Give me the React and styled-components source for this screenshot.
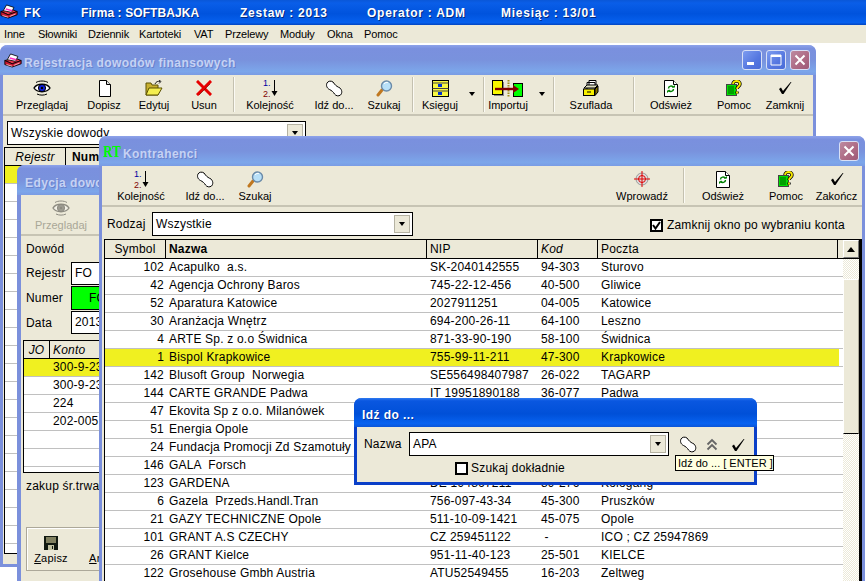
import React from 'react';
import styled, { createGlobalStyle } from 'styled-components';

const GlobalStyle = createGlobalStyle`
  html, body {
    margin: 0;
    padding: 0;
    background: #fff;
    height: 100%;
    overflow: hidden;
  }
  #root { height: 100%; }
  * { box-sizing: border-box; }
`;

const BEIGE = '#ece9d8';
const UI_FONT = '"Liberation Sans", Arial, sans-serif';

const Desktop = styled.div`
  position: relative;
  width: 866px;
  height: 581px;
  overflow: hidden;
  background: #fff;
  font-family: ${UI_FONT};
  font-size: 11px;
  color: #000;
`;

/* ---------- main application bar ---------- */
const AppBar = styled.div`
  display: flex;
  align-items: center;
  height: 25px;
  background: linear-gradient(180deg, #0a57d8 0%, #0a5ee8 12%, #0053dd 55%, #0660ee 90%, #0345c0 100%);
  color: #fff;
  font-size: 12px;
  font-weight: bold;
  text-shadow: 1px 1px 0 rgba(0, 0, 40, 0.55);
  white-space: nowrap;
`;
const AppField = styled.span`
  flex: none;
  width: ${({ $w }) => $w}px;
  letter-spacing: ${({ $sp }) => $sp ?? 0.75}px;
`;
const MenuBar = styled.div`
  display: flex;
  align-items: center;
  height: 18px;
  background: ${BEIGE};
  letter-spacing: -0.15px;
`;
const MenuEntry = styled.span`
  flex: none;
  width: ${({ $w }) => $w}px;
  padding-left: 4px;
`;

/* ---------- windows ---------- */
const Window = styled.div`
  position: absolute;
  left: ${({ $x }) => $x}px;
  top: ${({ $y }) => $y}px;
  width: ${({ $w }) => $w}px;
  height: ${({ $h }) => $h}px;
  display: flex;
  flex-direction: column;
  border: solid ${({ $active }) => ($active ? '#0a3fc8' : '#7b90dc')};
  border-width: 0 ${({ $bw }) => $bw}px ${({ $bw }) => $bw}px;
  border-radius: 8px 8px 0 0;
  background: ${BEIGE};
`;
const TitleBar = styled.div`
  flex: none;
  display: flex;
  align-items: center;
  gap: 2px;
  height: ${({ $h }) => $h}px;
  margin: 0 -${({ $bw }) => $bw}px;
  padding: 0 ${({ $bw }) => $bw + 1}px;
  border-radius: 7px 7px 0 0;
  background: ${({ $active }) =>
    $active
      ? 'linear-gradient(180deg, #2f7af0 0%, #0a57e0 10%, #0050d8 55%, #0762f0 88%, #0a55d8 100%)'
      : 'linear-gradient(180deg, #8ea3ea 0%, #7a90de 12%, #7992dd 50%, #7ca6ea 88%, #7a9ce4 100%)'};
`;
const TitleText = styled.span`
  flex: 1;
  padding: 5px 0 0 ${({ $pl }) => $pl || 0}px;
  font-size: 12px;
  font-weight: bold;
  letter-spacing: 0.42px;
  white-space: nowrap;
  overflow: hidden;
  color: ${({ $active }) => ($active ? '#fff' : '#c6d2f4')};
  text-shadow: 1px 1px 0 ${({ $active }) => ($active ? '#00309c' : '#6a82cc')};
`;
const RtLogo = styled.span`
  flex: none;
  width: 18px;
  font-family: "Liberation Serif", serif;
  font-size: 17px;
  font-weight: bold;
  color: #00ff00;
  line-height: 1;
  transform: scaleX(0.76);
  transform-origin: left center;
  white-space: nowrap;
`;
const CaptionButtons = styled.div`
  display: flex;
  gap: 4px;
  margin-right: 2px;
`;
const CaptionButton = styled.div`
  width: 20px;
  height: 20px;
  border: 1px solid #d8e0f6;
  border-radius: 3px;
  background: ${({ $close }) =>
    $close
      ? 'linear-gradient(135deg, #bd8aa0 0%, #ad6a84 60%, #9d5a78 100%)'
      : 'linear-gradient(135deg, #7d9cf0 0%, #5577e0 60%, #4a6cd8 100%)'};
  display: flex;
  align-items: center;
  justify-content: center;
`;

/* ---------- toolbars ---------- */
const Toolbar = styled.div`
  flex: none;
  display: flex;
  align-items: stretch;
  height: ${({ $h }) => $h}px;
  padding-left: ${({ $pl }) => $pl}px;
  border-bottom: 2px solid #c7c4b4;
`;
const ToolItem = styled.div`
  flex: none;
  width: ${({ $w }) => $w}px;
  display: flex;
  flex-direction: column;
  align-items: center;
  padding-top: 4px;
  color: ${({ $disabled }) => ($disabled ? '#a9a797' : '#000')};
  white-space: nowrap;
`;
const IconSlot = styled.div`
  height: 18px;
  margin-bottom: 2px;
  display: flex;
  align-items: center;
  justify-content: center;
  opacity: ${({ $disabled }) => ($disabled ? 0.4 : 1)};
  filter: ${({ $disabled }) => ($disabled ? 'grayscale(1)' : 'none')};
`;
const CaretSlot = styled.div`
  flex: none;
  width: ${({ $w }) => $w}px;
  display: flex;
  align-items: flex-start;
  justify-content: center;
  padding-top: 17px;
`;
const Caret = styled.div`
  width: 0;
  height: 0;
  border-left: 3.5px solid transparent;
  border-right: 3.5px solid transparent;
  border-top: 4px solid #000;
`;
const ToolSep = styled.div`
  flex: none;
  width: 2px;
  margin: 2px 0 2px ${({ $ml }) => $ml || 0}px;
  background: #c4c1b0;
  border-right: 1px solid #fbfaf4;
`;
const ToolSpacer = styled.div`
  flex: 1;
`;

/* ---------- form controls ---------- */
const ComboBox = styled.div`
  flex: none;
  display: flex;
  align-items: stretch;
  width: ${({ $w }) => $w}px;
  height: 24px;
  padding: 0 2px 0 3px;
  border: 1px solid #000;
  background: #fff;
  font-size: 12px;
  letter-spacing: 0.2px;
`;
const ComboValue = styled.span`
  flex: 1;
  align-self: center;
`;
const ComboArrow = styled.div`
  flex: none;
  width: 16px;
  margin: 2px 0;
  border: 1px solid #b5b2a2;
  background: ${BEIGE};
  display: flex;
  align-items: center;
  justify-content: center;
`;
const BlackBox = styled.div`
  flex: none;
  width: 13px;
  height: 13px;
  border: 2px solid #000;
  background: #fff;
  display: flex;
  align-items: center;
  justify-content: center;
`;

/* ---------- grids ---------- */
const GridFrame = styled.div`
  flex: ${({ $h }) => ($h ? 'none' : 1)};
  height: ${({ $h }) => ($h ? `${$h}px` : 'auto')};
  margin: ${({ $m }) => $m};
  overflow: hidden;
  border: 1px solid #000;
  background: #fff;
  font-size: 12px;
  letter-spacing: 0.2px;
`;
const GridHead = styled.div`
  display: grid;
  grid-template-columns: ${({ $cols }) => $cols};
  height: ${({ $h }) => $h}px;
  background: ${BEIGE};
  border-bottom: 1px solid #000;
`;
const HeadCell = styled.div`
  display: flex;
  align-items: center;
  justify-content: ${({ $center }) => ($center ? 'center' : 'flex-start')};
  padding-left: ${({ $center, $pl }) => ($center ? 0 : $pl ?? 3)}px;
  border-right: 1px solid #000;
  font-style: ${({ $italic }) => ($italic ? 'italic' : 'normal')};
  font-weight: ${({ $bold }) => ($bold ? 'bold' : 'normal')};
  overflow: hidden;
  white-space: nowrap;
`;
const GridRow = styled.div`
  display: grid;
  grid-template-columns: ${({ $cols }) => $cols};
  height: 18px;
  line-height: 17px;
  border-bottom: 1px solid #c0c0c0;
  background: ${({ $active }) => ($active ? '#f0f020' : '#fff')};
`;
const Cell = styled.div`
  padding: 0 ${({ $right }) => ($right ? 2 : 0)}px 0 ${({ $right }) => ($right ? 0 : 3)}px;
  text-align: ${({ $right }) => ($right ? 'right' : 'left')};
  overflow: hidden;
  white-space: pre;
`;
const RowTail = styled.div`
  background: #fff;
`;

/* ---------- Kontrahenci ---------- */
const FilterRow = styled.div`
  flex: none;
  display: flex;
  align-items: center;
  height: 31px;
  padding: 2px 0 0 ${({ $pl }) => $pl}px;
  font-size: 12px;
  letter-spacing: 0.2px;
`;
const FilterLabel = styled.span`
  width: 45px;
`;
const CheckLabel = styled.label`
  display: flex;
  align-items: center;
  gap: 4px;
  margin-left: auto;
  margin-right: 17px;
  padding-top: 3px;
`;
const ListArea = styled.div`
  flex: 1;
  margin: 1px 0 0 2px;
  overflow: hidden;
  border: solid #000;
  border-width: 1px 3px 0 1px;
  background: #fff;
  font-size: 12px;
  letter-spacing: 0.2px;
`;
const ListBody = styled.div`
  display: flex;
`;
const ListRows = styled.div`
  flex: 1;
`;
const Scroller = styled.div`
  flex: none;
  width: 16px;
  display: flex;
  flex-direction: column;
`;
const ScrollTrack = styled.div`
  height: ${({ $h }) => $h}px;
  background: repeating-conic-gradient(#fff 0% 25%, ${BEIGE} 0% 50%) 0 0 / 2px 2px;
`;
const ScrollThumb = styled.div`
  height: 155px;
  background: ${BEIGE};
  border: 1px solid #fff;
  border-bottom: 1px solid #000;
  border-right-color: #aca899;
`;
const ScrollUp = styled.div`
  flex: none;
  width: 16px;
  margin-left: 5px;
  display: flex;
  align-items: center;
  justify-content: center;
  background: ${BEIGE};
  border: 1px solid;
  border-color: #fff #777 #777 #fff;
`;
const UpArrow = styled.div`
  width: 0;
  height: 0;
  border-left: 4px solid transparent;
  border-right: 4px solid transparent;
  border-bottom: 5px solid #000;
`;

/* ---------- Edycja dowodu ---------- */
const FormBody = styled.div`
  flex: 1;
  display: flex;
  flex-direction: column;
  padding-left: 5px;
  font-size: 12px;
  letter-spacing: 0.2px;
`;
const FormRow = styled.div`
  flex: none;
  display: flex;
  align-items: center;
  height: ${({ $h }) => $h}px;
`;
const FormLabel = styled.span`
  flex: none;
  width: 45px;
`;
const FormInput = styled.div`
  flex: none;
  width: 120px;
  height: ${({ $h }) => $h}px;
  padding-left: ${({ $pl }) => $pl}px;
  border: 1px solid #000;
  line-height: ${({ $h }) => $h - 2}px;
  background: ${({ $green }) => ($green ? '#00ff00' : '#fff')};
`;
const Description = styled.div`
  margin-top: 5px;
  height: 49px;
  line-height: 16px;
  white-space: nowrap;
`;
const ButtonPanel = styled.div`
  display: flex;
  width: 200px;
  height: 44px;
  border: 1px solid #aca899;
  border-right: 0;
  box-shadow: inset 1px 1px 0 #fff;
`;
const PanelButton = styled.div`
  flex: none;
  width: ${({ $w }) => $w}px;
  display: flex;
  flex-direction: column;
  align-items: center;
  gap: 2px;
  padding-top: 8px;
  font-size: 11px;
  white-space: nowrap;
`;

/* ---------- Idź do dialog ---------- */
const DialogBody = styled.div`
  position: relative;
  flex: 1;
  display: flex;
  flex-direction: column;
  padding: 5px 0 0 7px;
  font-size: 12px;
  letter-spacing: 0.2px;
`;
const DialogRow = styled.div`
  display: flex;
  align-items: center;
`;
const DialogLabel = styled.span`
  width: 45px;
`;
const DialogTools = styled.div`
  display: flex;
  align-items: center;
  gap: 9px;
  margin-left: 10px;
  margin-top: 1px;
`;
const DialogCheckMark = styled.span`
  display: flex;
  margin-left: 4px;
`;
const DialogCheck = styled.div`
  display: flex;
  align-items: center;
  gap: 3px;
  margin: 5px 0 0 91px;
`;
const Tooltip = styled.div`
  position: absolute;
  left: 318px;
  top: 28px;
  width: 99px;
  height: 16px;
  padding-left: 2px;
  border: 1px solid #000;
  background: #ffffe1;
  font-size: 11px;
  letter-spacing: 0;
  line-height: 14px;
  white-space: nowrap;
`;

/* ---------- icons ---------- */
const AppIcon = () => (
  <svg width="18" height="15" viewBox="0 0 22 18">
    <path d="M1 9l12-3 8 3-11 4z" fill="#e8384a" stroke="#000" />
    <path d="M1 9v5l9 3 11-4V9l-11 4z" fill="#c81830" stroke="#000" />
    <path d="M4 8l4-7 9 3-3 6z" fill="#fff" stroke="#000" />
    <path d="M7 6l8 2" stroke="#ff30c0" strokeWidth="2" />
    <path d="M3 14l7 2M12 15l7-3" stroke="#ffd0d0" />
  </svg>
);
const EyeIcon = () => (
  <svg width="18" height="16" viewBox="0 0 18 16">
    <path d="M1 8C4 3 14 3 17 8 14 13 4 13 1 8z" fill="#fff" stroke="#000" strokeWidth="1.4" />
    <circle cx="9" cy="8" r="3.6" fill="#1020d8" stroke="#000" />
    <circle cx="9" cy="8" r="1.2" fill="#000" />
    <path d="M3 2.5C6 0.5 12 0.5 15 2.5M4 14c3 1.5 7 1.5 10 0" fill="none" stroke="#000" />
  </svg>
);
const PageIcon = () => (
  <svg width="13" height="17" viewBox="0 0 13 17">
    <path d="M1.500.5h7l4 4v12h-11z" fill="#fff" stroke="#000" />
    <path d="M8.500.5v4h4" fill="#ddd" stroke="#000" />
  </svg>
);
const FolderIcon = () => (
  <svg width="18" height="16" viewBox="0 0 18 16">
    <path d="M1 3h5l1 2h6v10H1z" fill="#c8b030" stroke="#5a5000" />
    <path d="M1 15l3-7h13l-4 7z" fill="#f4ee50" stroke="#5a5000" />
    <path d="M10 4c1-2.500 3-3 5-2.500M14 0l2 1.500-2 2" fill="none" stroke="#222" />
  </svg>
);
const CrossIcon = () => (
  <svg width="16" height="16" viewBox="0 0 16 16">
    <path d="M2 2l12 12M14 2L2 14" stroke="#e60000" strokeWidth="3" strokeLinecap="square" />
    <path d="M3 15l11-11" stroke="#700000" strokeWidth=".6" />
  </svg>
);
const SortDigit = styled.text`
  font-family: ${UI_FONT};
  font-size: 9px;
  letter-spacing: 0;
`;
const SortSvg = styled.svg`
  overflow: visible;
`;
const SortIcon = () => (
  <SortSvg width="15" height="18" viewBox="0 0 15 18">
    <SortDigit x="0" y="7" fill="#0000a0">1.</SortDigit>
    <SortDigit x="0" y="18" fill="#800000">2.</SortDigit>
    <path d="M11.500 1v12" stroke="#000" />
    <path d="M8.500 12h6l-3 5z" fill="#000" />
  </SortSvg>
);
const LinkIcon = () => (
  <svg width="18" height="17" viewBox="0 0 18 17">
    <path
      d="M2 3C3 1 6 .5 8 2l1.500 2C11 6 13 7 15 8c2 2 2.500 5 .5 7-2 1.500-4.500 1-6-1-1-2-3-3.500-5-4.500C1.500 8 1 5 2 3z"
      fill="#fff"
      stroke="#000"
    />
  </svg>
);
const LensIcon = () => (
  <svg width="17" height="17" viewBox="0 0 17 17">
    <path d="M6 10l-4 5" stroke="#c07820" strokeWidth="3" strokeLinecap="round" />
    <circle cx="10.500" cy="6" r="5" fill="#b8e0f8" stroke="#6a8aa8" strokeWidth="1.400" />
    <path d="M8 4c1-1.500 3-2 4-1.500" fill="none" stroke="#fff" />
  </svg>
);
const LedgerIcon = () => (
  <svg width="17" height="17" viewBox="0 0 17 17">
    <rect x=".5" y=".5" width="16" height="16" fill="#f8f840" stroke="#000" />
    <path d="M.5 8.500h16M.5 3h16M.5 11h16" stroke="#444" />
    <rect x="6" y="4" width="4" height="3" fill="#0030d0" />
    <rect x="6" y="12" width="4" height="3" fill="#0030d0" />
  </svg>
);
const ImportIcon = () => (
  <svg width="32" height="17" viewBox="0 0 32 17">
    <rect x="2" y="2" width="10" height="14" fill="#888" />
    <rect x=".5" y=".5" width="10" height="14" fill="#f8f800" stroke="#000" />
    <path d="M16.500 0v17" stroke="#a09020" strokeDasharray="1.500 1" strokeWidth="2" />
    <rect x="22" y="4" width="9" height="13" fill="#777" />
    <rect x="21.500" y="3.500" width="9" height="13" fill="#00ff00" stroke="#000" />
    <path d="M3 9h19" stroke="#800000" strokeWidth="2.400" />
    <path d="M21 5l6 4-6 4z" fill="#800000" />
  </svg>
);
const DrawerIcon = () => (
  <svg width="16" height="16" viewBox="0 0 16 16">
    <path d="M6 .5h7v7H6zM4 2.500h8v8H4z" fill="#fff" stroke="#000" />
    <path d="M1 8l3-3h11l-3 3z" fill="#e0e0c0" stroke="#000" />
    <rect x=".5" y="9" width="11" height="6.500" fill="#f8f000" stroke="#000" />
    <path d="M12 9l3-3v6l-3 3.500z" fill="#807000" stroke="#000" />
    <path d="M4 12h4" stroke="#000" />
  </svg>
);
const RefreshIcon = () => (
  <svg width="14" height="17" viewBox="0 0 14 17">
    <path d="M.5.5h9l4 4v12H.5z" fill="#fff" stroke="#000" />
    <path d="M9.500.5v4h4" fill="#fff" stroke="#000" />
    <path d="M9.500 7.500C8 5 4.500 6 4.500 8.500" fill="none" stroke="#008000" strokeWidth="1.500" />
    <path d="M8 7.500h3V5z" fill="#008000" />
    <path d="M4.500 10c1.500 2.500 5 1.500 5-1" fill="none" stroke="#008000" strokeWidth="1.500" />
    <path d="M6 10.500H3V13z" fill="#008000" />
  </svg>
);
const HelpIcon = () => (
  <svg width="16" height="16" viewBox="0 0 16 16">
    <rect x=".5" y="4.500" width="10" height="11" fill="#00e000" stroke="#444" />
    <path d="M2 7h6M2 9h6M2 11h6M2 13h6" stroke="#006000" />
    <path d="M7 4c0-4 7-4 7 0 0 2.500-3 2.500-3 5M11 11.500v2" fill="none" stroke="#000" strokeWidth="3.400" />
    <path d="M7 4c0-4 7-4 7 0 0 2.500-3 2.500-3 5M11 11.500v2" fill="none" stroke="#f8e800" strokeWidth="1.800" />
  </svg>
);
const CheckIcon = () => (
  <svg width="14" height="14" viewBox="0 0 14 14">
    <path d="M1 8l3 5h1.500L13.500 1h-.8L5 10 3 6.500z" fill="#000" />
  </svg>
);
const TargetIcon = () => (
  <svg width="16" height="16" viewBox="0 0 16 16">
    <circle cx="8" cy="8" r="6" fill="#ddd" stroke="#999" />
    <circle cx="8" cy="8" r="3.500" fill="none" stroke="#e00000" />
    <path d="M8 0v16M0 8h16" stroke="#e00000" />
  </svg>
);
const FloppyIcon = () => (
  <svg width="14" height="14" viewBox="0 0 14 14">
    <rect width="14" height="14" fill="#101810" />
    <rect x="2" y="1" width="10" height="6" fill="#808060" />
    <rect x="4" y="9" width="6" height="5" fill="#c0c0a0" />
    <rect x="8" y="10" width="1" height="3" fill="#101810" />
  </svg>
);
const ChevronsUp = () => (
  <svg width="12" height="13" viewBox="0 0 12 13">
    <path d="M1.500 6.500L6 2l4.500 4.500M1.500 11.500L6 7l4.500 4.500" fill="none" stroke="#666" strokeWidth="1.800" />
  </svg>
);
const SmallCheck = () => (
  <svg width="9" height="9" viewBox="0 0 9 9">
    <path d="M1 4l2.500 3.500L8 1" fill="none" stroke="#000" strokeWidth="2" />
  </svg>
);
const MinGlyph = () => (
  <svg width="12" height="12" viewBox="0 0 12 12">
    <rect x="1" y="8" width="7" height="3" fill="#fff" />
  </svg>
);
const MaxGlyph = () => (
  <svg width="12" height="12" viewBox="0 0 12 12">
    <path d="M1 1h10v10H1z" fill="none" stroke="#fff" strokeWidth="1" />
    <rect x="1" y="1" width="10" height="2" fill="#fff" />
  </svg>
);
const CloseGlyph = () => (
  <svg width="12" height="12" viewBox="0 0 12 12">
    <path d="M1.500 1.500l9 9M10.500 1.500l-9 9" stroke="#fff" strokeWidth="2" />
  </svg>
);

const Tool = ({ w, icon, label }) => (
  <ToolItem $w={w}>
    <IconSlot>{icon}</IconSlot>
    {label}
  </ToolItem>
);

/* ---------- data ---------- */
const CONTRACTORS = [
  ['102', 'Acapulko  a.s.', 'SK-2040142555', '94-303', 'Sturovo'],
  ['42', 'Agencja Ochrony Baros', '745-22-12-456', '40-500', 'Gliwice'],
  ['52', 'Aparatura Katowice', '2027911251', '04-005', 'Katowice'],
  ['30', 'Aranżacja Wnętrz', '694-200-26-11', '64-100', 'Leszno'],
  ['4', 'ARTE Sp. z o.o Świdnica', '871-33-90-190', '58-100', 'Świdnica'],
  ['1', 'Bispol Krapkowice', '755-99-11-211', '47-300', 'Krapkowice'],
  ['142', 'Blusoft Group  Norwegia', 'SE556498407987', '26-022', 'TAGARP'],
  ['144', 'CARTE GRANDE Padwa', 'IT 19951890188', '36-077', 'Padwa'],
  ['47', 'Ekovita Sp z o.o. Milanówek', '', '', ''],
  ['51', 'Energia Opole', '', '', ''],
  ['24', 'Fundacja Promocji Zd Szamotuły', '', '', ''],
  ['146', 'GALA  Forsch', '', '', ''],
  ['123', 'GARDENA', 'DE 194867211', '89-276', 'Kologang'],
  ['6', 'Gazela  Przeds.Handl.Tran', '756-097-43-34', '45-300', 'Pruszków'],
  ['21', 'GAZY TECHNICZNE Opole', '511-10-09-1421', '45-075', 'Opole'],
  ['101', 'GRANT A.S CZECHY', 'CZ 259451122', ' -', 'ICO ; CZ 25947869'],
  ['26', 'GRANT Kielce', '951-11-40-123', '25-501', 'KIELCE'],
  ['122', 'Grosehouse Gmbh Austria', 'ATU52549455', '16-203', 'Zeltweg'],
];
const LIST_COLS = '61px 261px 111px 60px 1fr';
const LIST_ROW_COLS = '61px 261px 111px 60px 1fr 4px';
const ENTRY_COLS = '26px 200px';
const ENTRY_ROWS = ['300-9-23', '300-9-23', '224', '202-005', '', '', ''];
const MAIN_COLS = '61px 1fr';

export default function App() {
  return (
    <Desktop>
      <GlobalStyle />
      <AppBar>
        <AppField $w={24}><AppIcon /></AppField>
        <AppField $w={57}>FK</AppField>
        <AppField $w={159} $sp={0.1}>Firma : SOFTBAJKA</AppField>
        <AppField $w={127}>Zestaw : 2013</AppField>
        <AppField $w={134}>Operator : ADM</AppField>
        <AppField $w={120}>Miesiąc : 13/01</AppField>
      </AppBar>
      <MenuBar>
        <MenuEntry $w={34}>Inne</MenuEntry>
        <MenuEntry $w={50}>Słowniki</MenuEntry>
        <MenuEntry $w={51}>Dziennik</MenuEntry>
        <MenuEntry $w={55}>Kartoteki</MenuEntry>
        <MenuEntry $w={31}>VAT</MenuEntry>
        <MenuEntry $w={55}>Przelewy</MenuEntry>
        <MenuEntry $w={47}>Moduły</MenuEntry>
        <MenuEntry $w={37}>Okna</MenuEntry>
        <MenuEntry $w={50}>Pomoc</MenuEntry>
      </MenuBar>

      <Window $x={0} $y={45} $w={816} $h={522} $bw={3}>
        <TitleBar $h={30} $bw={3}>
          <AppIcon />
          <TitleText>Rejestracja dowodów finansowych</TitleText>
          <CaptionButtons>
            <CaptionButton><MinGlyph /></CaptionButton>
            <CaptionButton><MaxGlyph /></CaptionButton>
            <CaptionButton $close><CloseGlyph /></CaptionButton>
          </CaptionButtons>
        </TitleBar>
        <Toolbar $h={41} $pl={4}>
          <Tool w={70} icon={<EyeIcon />} label="Przeglądaj" />
          <Tool w={54} icon={<PageIcon />} label="Dopisz" />
          <Tool w={46} icon={<FolderIcon />} label="Edytuj" />
          <Tool w={54} icon={<CrossIcon />} label="Usun" />
          <ToolSep $ml={2} />
          <Tool w={70} icon={<SortIcon />} label="Kolejność" />
          <Tool w={58} icon={<LinkIcon />} label="Idź do..." />
          <Tool w={42} icon={<LensIcon />} label="Szukaj" />
          <ToolSep $ml={7} />
          <Tool w={52} icon={<LedgerIcon />} label="Księguj" />
          <CaretSlot $w={12}><Caret /></CaretSlot>
          <ToolSep $ml={5} />
          <Tool w={46} icon={<ImportIcon />} label="Importuj" />
          <CaretSlot $w={22}><Caret /></CaretSlot>
          <ToolSep />
          <Tool w={72} icon={<DrawerIcon />} label="Szuflada" />
          <ToolSep $ml={6} />
          <Tool w={72} icon={<RefreshIcon />} label="Odśwież" />
          <Tool w={54} icon={<HelpIcon />} label="Pomoc" />
          <Tool w={48} icon={<CheckIcon />} label="Zamknij" />
        </Toolbar>
        <FilterRow $pl={4}>
          <ComboBox $w={299}>
            <ComboValue>Wszyskie dowody</ComboValue>
            <ComboArrow><Caret /></ComboArrow>
          </ComboBox>
        </FilterRow>
        <GridFrame $m="0 0 10px 1px">
          <GridHead $cols={MAIN_COLS} $h={18}>
            <HeadCell $italic $center>Rejestr</HeadCell>
            <HeadCell $bold $pl={6}>Num</HeadCell>
          </GridHead>
          {Array.from({ length: 22 }, (_, i) => (
            <GridRow key={i} $cols={MAIN_COLS} $active={i === 0} />
          ))}
        </GridFrame>
      </Window>

      <Window $x={17} $y={165} $w={260} $h={430} $bw={4}>
        <TitleBar $h={30} $bw={4}>
          <TitleText $pl={3}>Edycja dowodu</TitleText>
        </TitleBar>
        <Toolbar $h={41} $pl={0}>
          <ToolItem $w={80} $disabled>
            <IconSlot $disabled><EyeIcon /></IconSlot>
            Przeglądaj
          </ToolItem>
        </Toolbar>
        <FormBody>
          <FormRow $h={25}><FormLabel>Dowód</FormLabel></FormRow>
          <FormRow $h={24}>
            <FormLabel>Rejestr</FormLabel>
            <FormInput $h={23} $pl={3}>FO</FormInput>
          </FormRow>
          <FormRow $h={25}>
            <FormLabel>Numer</FormLabel>
            <FormInput $h={24} $pl={17} $green>FO</FormInput>
          </FormRow>
          <FormRow $h={25}>
            <FormLabel>Data</FormLabel>
            <FormInput $h={23} $pl={3}>2013-01-15</FormInput>
          </FormRow>
          <GridFrame $h={133} $m="5px 0 0 -3px">
            <GridHead $cols={ENTRY_COLS} $h={18}>
              <HeadCell $italic $center>JO</HeadCell>
              <HeadCell $italic>Konto</HeadCell>
            </GridHead>
            {ENTRY_ROWS.map((konto, i) => (
              <GridRow key={i} $cols={ENTRY_COLS} $active={i === 0}>
                <Cell />
                <Cell>{konto}</Cell>
              </GridRow>
            ))}
          </GridFrame>
          <Description>zakup śr.trwałych</Description>
          <ButtonPanel>
            <PanelButton $w={48}>
              <FloppyIcon />
              <span><u>Z</u>apisz</span>
            </PanelButton>
            <PanelButton $w={60}>
              <CheckIcon />
              <span><u>A</u>nuluj</span>
            </PanelButton>
          </ButtonPanel>
        </FormBody>
      </Window>

      <Window $x={99} $y={136} $w={766} $h={460} $bw={3}>
        <TitleBar $h={30} $bw={3}>
          <RtLogo>RT</RtLogo>
          <TitleText>Kontrahenci</TitleText>
          <CaptionButtons>
            <CaptionButton $close><CloseGlyph /></CaptionButton>
          </CaptionButtons>
        </TitleBar>
        <Toolbar $h={41} $pl={5}>
          <Tool w={68} icon={<SortIcon />} label="Kolejność" />
          <Tool w={60} icon={<LinkIcon />} label="Idź do..." />
          <Tool w={40} icon={<LensIcon />} label="Szukaj" />
          <ToolSpacer />
          <Tool w={60} icon={<TargetIcon />} label="Wprowadź" />
          <ToolSep $ml={11} />
          <Tool w={76} icon={<RefreshIcon />} label="Odśwież" />
          <Tool w={50} icon={<HelpIcon />} label="Pomoc" />
          <Tool w={51} icon={<CheckIcon />} label="Zakończ" />
        </Toolbar>
        <FilterRow $pl={5}>
          <FilterLabel>Rodzaj</FilterLabel>
          <ComboBox $w={261}>
            <ComboValue>Wszystkie</ComboValue>
            <ComboArrow><Caret /></ComboArrow>
          </ComboBox>
          <CheckLabel>
            <BlackBox><SmallCheck /></BlackBox>
            Zamknij okno po wybraniu konta
          </CheckLabel>
        </FilterRow>
        <ListArea>
          <GridHead $cols={`${LIST_COLS} 21px`} $h={19}>
            <HeadCell $center>Symbol</HeadCell>
            <HeadCell $bold>Nazwa</HeadCell>
            <HeadCell>NIP</HeadCell>
            <HeadCell $italic>Kod</HeadCell>
            <HeadCell>Poczta</HeadCell>
            <ScrollUp><UpArrow /></ScrollUp>
          </GridHead>
          <ListBody>
            <ListRows>
              {CONTRACTORS.map(([symbol, name, nip, code, city]) => (
                <GridRow key={symbol} $cols={LIST_ROW_COLS} $active={symbol === '1'}>
                  <Cell $right>{symbol}</Cell>
                  <Cell>{name}</Cell>
                  <Cell>{nip}</Cell>
                  <Cell>{code}</Cell>
                  <Cell>{city}</Cell>
                  <RowTail />
                </GridRow>
              ))}
            </ListRows>
            <Scroller>
              <ScrollTrack $h={20} />
              <ScrollThumb />
              <ScrollTrack $h={300} />
            </Scroller>
          </ListBody>
        </ListArea>
      </Window>

      <Window $x={354} $y={398} $w={403} $h={87} $bw={3} $active>
        <TitleBar $h={29} $bw={3} $active>
          <TitleText $active $pl={4}>Idź do ...</TitleText>
        </TitleBar>
        <DialogBody>
          <DialogRow>
            <DialogLabel>Nazwa</DialogLabel>
            <ComboBox $w={260}>
              <ComboValue>APA</ComboValue>
              <ComboArrow><Caret /></ComboArrow>
            </ComboBox>
            <DialogTools>
              <LinkIcon />
              <ChevronsUp />
              <DialogCheckMark><CheckIcon /></DialogCheckMark>
            </DialogTools>
          </DialogRow>
          <DialogCheck>
            <BlackBox />
            Szukaj dokładnie
          </DialogCheck>
          <Tooltip>Idź do ... [ ENTER ]</Tooltip>
        </DialogBody>
      </Window>
    </Desktop>
  );
}
